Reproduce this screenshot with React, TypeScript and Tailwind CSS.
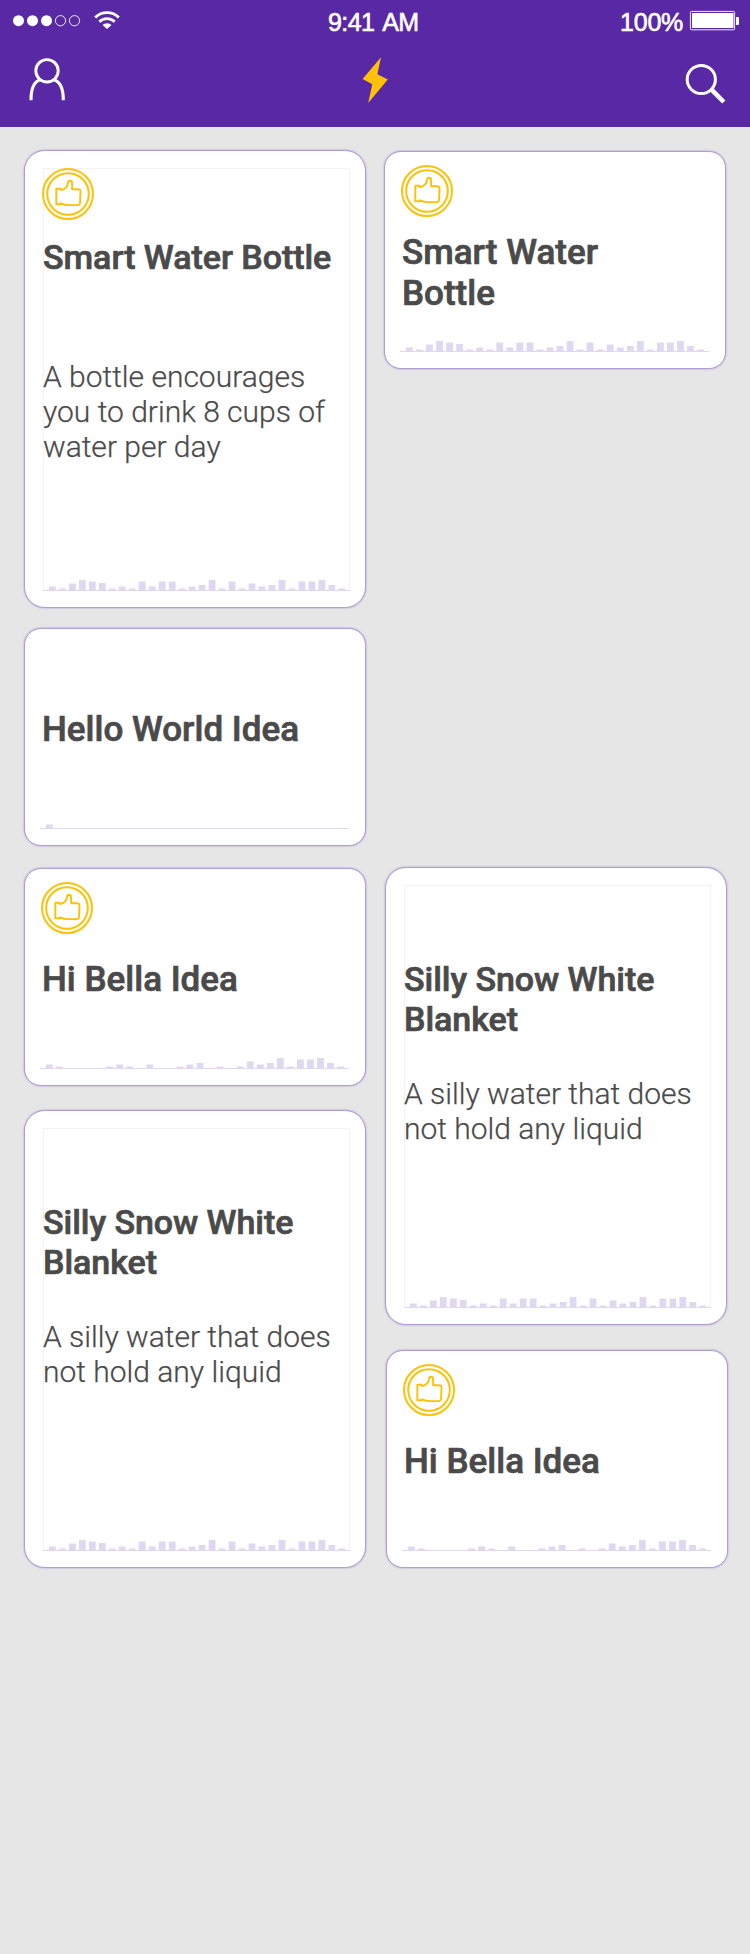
type Levels = number[];

const BUSY: Levels = [
  3.5, 1.5, 6.5, 10, 8.5, 7, 1.5, 3.5, 1.5, 8.5, 3.5, 8.5, 8.5, 1.5, 3.5, 5, 10, 1.5, 8.5, 1.5, 6.5, 3.5, 5, 10, 1.5, 8.5, 8.5, 10, 5, 1.5,
];
const RISING: Levels = [
  3.5, 1.5, 0, 0, 0, 0, 1.5, 3.5, 1.5, 0, 3.5, 0, 0, 1.5, 3.5, 5, 0, 1.5, 0, 1.5, 6.5, 3.5, 5, 10, 1.5, 8.5, 8.5, 10, 5, 1.5,
];
const SINGLE: Levels = [3.5];

function Activity({ levels, width }: { levels: Levels; width: number }) {
  const pitch = width === 309 ? 10.04 : 9.98;
  return (
    <svg width={width} height="12" viewBox={`0 0 ${width} 12`} className="block shrink-0" fill="#e0d8f0">
      {levels.map((h, i) => (
        <rect key={i} x={6 + i * pitch} y={11 - h} width="6.8" height={h} />
      ))}
      <rect x="0" y="11" width={width} height="1" />
    </svg>
  );
}

function Badge({ className = "" }: { className?: string }) {
  return (
    <svg width="52" height="52" viewBox="0 0 52 52" fill="none" stroke="#ffc107" strokeWidth="2" className={`block shrink-0 ${className}`}>
      <circle cx="26" cy="26" r="25" />
      <circle cx="26" cy="26" r="20.8" />
      <path
        strokeWidth="1.9"
        strokeLinejoin="round"
        d="M14.3 20.8H18.4L19 22C22.8 21.4 25.6 18.8 25.9 15.2C26 13.4 26.7 12.7 28 12.7C29.4 12.7 30.1 13.6 30.1 15.2V21.2H36C37.8 21.2 38.5 22 38.5 23.5L38 35C37.9 36.5 37 37.1 35.5 37.1H27C24 37.1 21.5 36.4 19 35.3L18.2 36.3H14.3Z"
      />
    </svg>
  );
}

const cardBase = "flex w-[342px] shrink-0 flex-col border border-[#b19dd5] bg-white shadow-[0_0_2px_rgba(103,58,183,0.5)]";
const titleBase = "font-medium [-webkit-text-stroke:0.7px_#4a4a4a]";

function SmallCard({ title, levels, liked, className = "", titleClass }: {
  title: string; levels: Levels; liked?: boolean; className?: string; titleClass: string;
}) {
  return (
    <article className={`${cardBase} h-[218px] rounded-[17px] pt-[13px] pl-[15px] ${className}`}>
      <div className="h-[52px] pl-px">{liked && <Badge />}</div>
      <h2 className={`w-[240px] pl-[2px] text-[35px] leading-[41px] ${titleBase} ${titleClass}`}>{title}</h2>
      <div className="mt-auto mb-[16px]">
        <Activity levels={levels} width={309} />
      </div>
    </article>
  );
}

function LargeCard({ title, text, levels, liked, className = "" }: {
  title: string; text: string; levels: Levels; liked?: boolean; className?: string;
}) {
  return (
    <article className={`${cardBase} h-[458px] rounded-[21px] pt-[17px] pl-[18px] ${className}`}>
      <div className="flex h-[423px] w-[307px] flex-col border-x border-t border-[#f3f3f4]">
        <div className="-mt-px h-[52px]">{liked && <Badge className="-ml-[2px]" />}</div>
        <h2 className={`-ml-px text-[34px] leading-[40px] tracking-[-0.05px] ${titleBase} ${liked ? "mt-[17px] h-[122px] w-[306px]" : "mt-[22px] h-[117px] w-[270px]"}`}>{title}</h2>
        <p className="-ml-px w-[300px] text-[30px] leading-[35px] font-light [-webkit-text-stroke:0.25px_#4a4a4a]">{text}</p>
        <div className="mt-auto -ml-px">
          <Activity levels={levels} width={307} />
        </div>
      </div>
    </article>
  );
}

function Header() {
  return (
    <header className="flex h-[127px] flex-col bg-[#5929a5] text-white">
      <div className="flex h-[42px] items-start pl-[13px] font-['Liberation_Sans',sans-serif] text-[25px] leading-[28px] [-webkit-text-stroke:0.6px_white]">
        <svg width="108" height="32" viewBox="13 0 108 32" className="block" fill="none" stroke="white">
          {[18.5, 32.5, 46.5].map((x) => (
            <circle key={x} cx={x} cy="20.7" r="5.5" fill="white" stroke="none" />
          ))}
          {[60.5, 74.5].map((x) => (
            <circle key={x} cx={x} cy="20.7" r="5.1" strokeWidth="0.9" />
          ))}
          <path d="M95.2 17.4A16.8 16.8 0 0 1 118.8 17.4" strokeWidth="2.8" />
          <path d="M99.3 21.8A10.8 10.8 0 0 1 114.7 21.8" strokeWidth="2.8" />
          <path d="M102.5 25.1A6.4 6.4 0 0 1 111.5 25.1L107 29Z" fill="white" stroke="none" />
        </svg>
        <span className="mt-[8px] ml-[207px] w-[92px] tracking-[-0.6px] [word-spacing:3px] whitespace-nowrap">9:41 AM</span>
        <span className="mt-[8px] ml-[200px] w-[69px] tracking-[-0.2px] whitespace-nowrap">100%</span>
        <svg width="50" height="32" viewBox="689 0 50 32" className="block" fill="white">
          <rect x="690.4" y="11.4" width="44.2" height="18.4" rx="1" fill="none" stroke="white" strokeWidth="0.9" />
          <rect x="692" y="13" width="41.5" height="15" />
          <path d="M736 17H738Q739 17 739 18V24Q739 25 738 25H736Z" />
        </svg>
      </div>
      <nav className="flex justify-between pr-[23px] pl-[28px]">
        <svg width="40" height="68" viewBox="28 42 40 68" fill="none" stroke="white" strokeWidth="2.9">
          <circle cx="47" cy="70.8" r="11.2" />
          <path d="M40.3 79.8C33.5 81.6 31 88 31 100.3M53.7 79.8C60.5 81.6 63.3 88 63.3 100.3" strokeWidth="3.1" />
        </svg>
        <svg width="28" height="68" viewBox="361 42 28 68" fill="#ffc107" className="-ml-[3px]">
          <path d="M381 57.3L362.6 79L372.3 84.3L368.2 103L387.8 79.4L377.4 74.3Z" />
        </svg>
        <svg width="42" height="68" viewBox="684 42 42 68" fill="none" stroke="white">
          <circle cx="700.3" cy="79.5" r="14.1" strokeWidth="3" />
          <path d="M710.3 89.3L722.8 102" strokeWidth="4.6" />
        </svg>
      </nav>
    </header>
  );
}

export default function App() {
  return (
    <div className="min-h-[1954px] w-[750px] bg-[#e6e6e6] font-['Roboto',sans-serif] text-[#4a4a4a]">
      <Header />
      <main className="flex gap-[18px] pl-[24px]">
        <section className="flex flex-col pt-[23px]">
          <LargeCard title="Smart Water Bottle" text="A bottle encourages you to drink 8 cups of water per day" levels={BUSY} liked />
          <SmallCard title="Hello World Idea" levels={SINGLE} className="mt-[20px]" titleClass="mt-[15px] whitespace-nowrap" />
          <SmallCard title="Hi Bella Idea" levels={RISING} liked className="mt-[22px]" titleClass="mt-[25px] whitespace-nowrap" />
          <LargeCard title="Silly Snow White Blanket" text="A silly water that does not hold any liquid" levels={BUSY} className="mt-[24px]" />
        </section>
        <section className="flex flex-col pt-[24px]">
          <SmallCard title="Smart Water Bottle" levels={BUSY} liked titleClass="mt-[15px]" />
          <LargeCard title="Silly Snow White Blanket" text="A silly water that does not hold any liquid" levels={BUSY} className="mt-[498px] ml-px" />
          <SmallCard title="Hi Bella Idea" levels={RISING} liked className="mt-[25px] ml-[2px]" titleClass="mt-[25px] whitespace-nowrap" />
        </section>
      </main>
    </div>
  );
}
